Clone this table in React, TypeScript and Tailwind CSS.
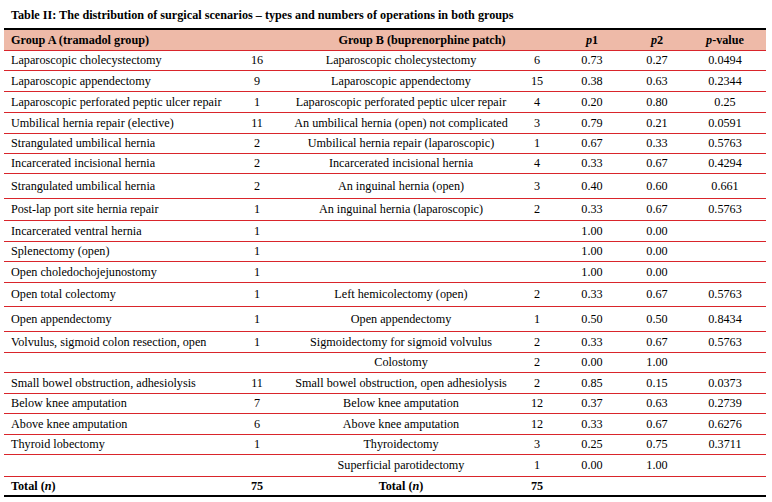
import React from "react";

type Row = {
  h: string;
  a: string;
  an: string;
  b: string;
  bn: string;
  p1: string;
  p2: string;
  pv: string;
};

const rows: Row[] = [
  { h: "h-[20px]", a: "Laparoscopic cholecystectomy", an: "16", b: "Laparoscopic cholecystectomy", bn: "6", p1: "0.73", p2: "0.27", pv: "0.0494" },
  { h: "h-[21px]", a: "Laparoscopic appendectomy", an: "9", b: "Laparoscopic appendectomy", bn: "15", p1: "0.38", p2: "0.63", pv: "0.2344" },
  { h: "h-[21px]", a: "Laparoscopic perforated peptic ulcer repair", an: "1", b: "Laparoscopic perforated peptic ulcer repair", bn: "4", p1: "0.20", p2: "0.80", pv: "0.25" },
  { h: "h-[21px]", a: "Umbilical hernia repair (elective)", an: "11", b: "An umbilical hernia (open) not complicated", bn: "3", p1: "0.79", p2: "0.21", pv: "0.0591" },
  { h: "h-[20px]", a: "Strangulated umbilical hernia", an: "2", b: "Umbilical hernia repair (laparoscopic)", bn: "1", p1: "0.67", p2: "0.33", pv: "0.5763" },
  { h: "h-[20px]", a: "Incarcerated incisional hernia", an: "2", b: "Incarcerated incisional hernia", bn: "4", p1: "0.33", p2: "0.67", pv: "0.4294" },
  { h: "h-[25px]", a: "Strangulated umbilical hernia", an: "2", b: "An inguinal hernia (open)", bn: "3", p1: "0.40", p2: "0.60", pv: "0.661" },
  { h: "h-[22px]", a: "Post-lap port site hernia repair", an: "1", b: "An inguinal hernia (laparoscopic)", bn: "2", p1: "0.33", p2: "0.67", pv: "0.5763" },
  { h: "h-[21px]", a: "Incarcerated ventral hernia", an: "1", b: "", bn: "", p1: "1.00", p2: "0.00", pv: "" },
  { h: "h-[20px]", a: "Splenectomy (open)", an: "1", b: "", bn: "", p1: "1.00", p2: "0.00", pv: "" },
  { h: "h-[21px]", a: "Open choledochojejunostomy", an: "1", b: "", bn: "", p1: "1.00", p2: "0.00", pv: "" },
  { h: "h-[24px]", a: "Open total colectomy", an: "1", b: "Left hemicolectomy (open)", bn: "2", p1: "0.33", p2: "0.67", pv: "0.5763" },
  { h: "h-[25px]", a: "Open appendectomy", an: "1", b: "Open appendectomy", bn: "1", p1: "0.50", p2: "0.50", pv: "0.8434" },
  { h: "h-[21px]", a: "Volvulus, sigmoid colon resection, open", an: "1", b: "Sigmoidectomy for sigmoid volvulus", bn: "2", p1: "0.33", p2: "0.67", pv: "0.5763" },
  { h: "h-[20px]", a: "", an: "", b: "Colostomy", bn: "2", p1: "0.00", p2: "1.00", pv: "" },
  { h: "h-[21px]", a: "Small bowel obstruction, adhesiolysis", an: "11", b: "Small bowel obstruction, open adhesiolysis", bn: "2", p1: "0.85", p2: "0.15", pv: "0.0373" },
  { h: "h-[20px]", a: "Below knee amputation", an: "7", b: "Below knee amputation", bn: "12", p1: "0.37", p2: "0.63", pv: "0.2739" },
  { h: "h-[21px]", a: "Above knee amputation", an: "6", b: "Above knee amputation", bn: "12", p1: "0.33", p2: "0.67", pv: "0.6276" },
  { h: "h-[20px]", a: "Thyroid lobectomy", an: "1", b: "Thyroidectomy", bn: "3", p1: "0.25", p2: "0.75", pv: "0.3711" },
  { h: "h-[22px]", a: "", an: "", b: "Superficial parotidectomy", bn: "1", p1: "0.00", p2: "1.00", pv: "" },
];

const grid = "grid grid-cols-[228px_50px_238px_34px_76px_54px_82px] items-center";

export default function App() {
  return (
    <div
      className="w-[772px] h-[502px] bg-white text-black text-[12.2px]"
      style={{ fontFamily: '"Liberation Serif", "Times New Roman", serif' }}
    >
      <div className="h-[28px] pt-[8px] pl-[11px] leading-[14px] font-bold text-[12.2px] whitespace-nowrap">
        Table II: The distribution of surgical scenarios – types and numbers of operations in both groups
      </div>
      <div className="ml-[4px] w-[762px] border-t-2 border-black">
        <div className={`${grid} h-[21px] bg-[#eebaa8] border-b border-[#d9252b] font-bold`}>
          <div className="pl-[7px]">Group A (tramadol group)</div>
          <div></div>
          <div className="col-span-2 pl-[8px] text-center">Group B (buprenorphine patch)</div>
          <div className="text-center">
            <i>p</i>1
          </div>
          <div className="text-center">
            <i>p</i>2
          </div>
          <div className="text-center">
            <i>p</i>-value
          </div>
        </div>
        {rows.map((r, i) => (
          <div key={i} className={`${grid} ${r.h} border-b border-[#d9252b]`}>
            <div className="pl-[7px] whitespace-nowrap">{r.a}</div>
            <div className="text-center">{r.an}</div>
            <div className="text-center whitespace-nowrap">{r.b}</div>
            <div className="text-center">{r.bn}</div>
            <div className="text-center">{r.p1}</div>
            <div className="text-center">{r.p2}</div>
            <div className="text-center">{r.pv}</div>
          </div>
        ))}
        <div className={`${grid} h-[20px] border-b-2 border-black font-bold`}>
          <div className="pl-[7px]">
            Total (<i>n</i>)
          </div>
          <div className="text-center">75</div>
          <div className="text-center">
            Total (<i>n</i>)
          </div>
          <div className="text-center">75</div>
          <div></div>
          <div></div>
          <div></div>
        </div>
      </div>
    </div>
  );
}
